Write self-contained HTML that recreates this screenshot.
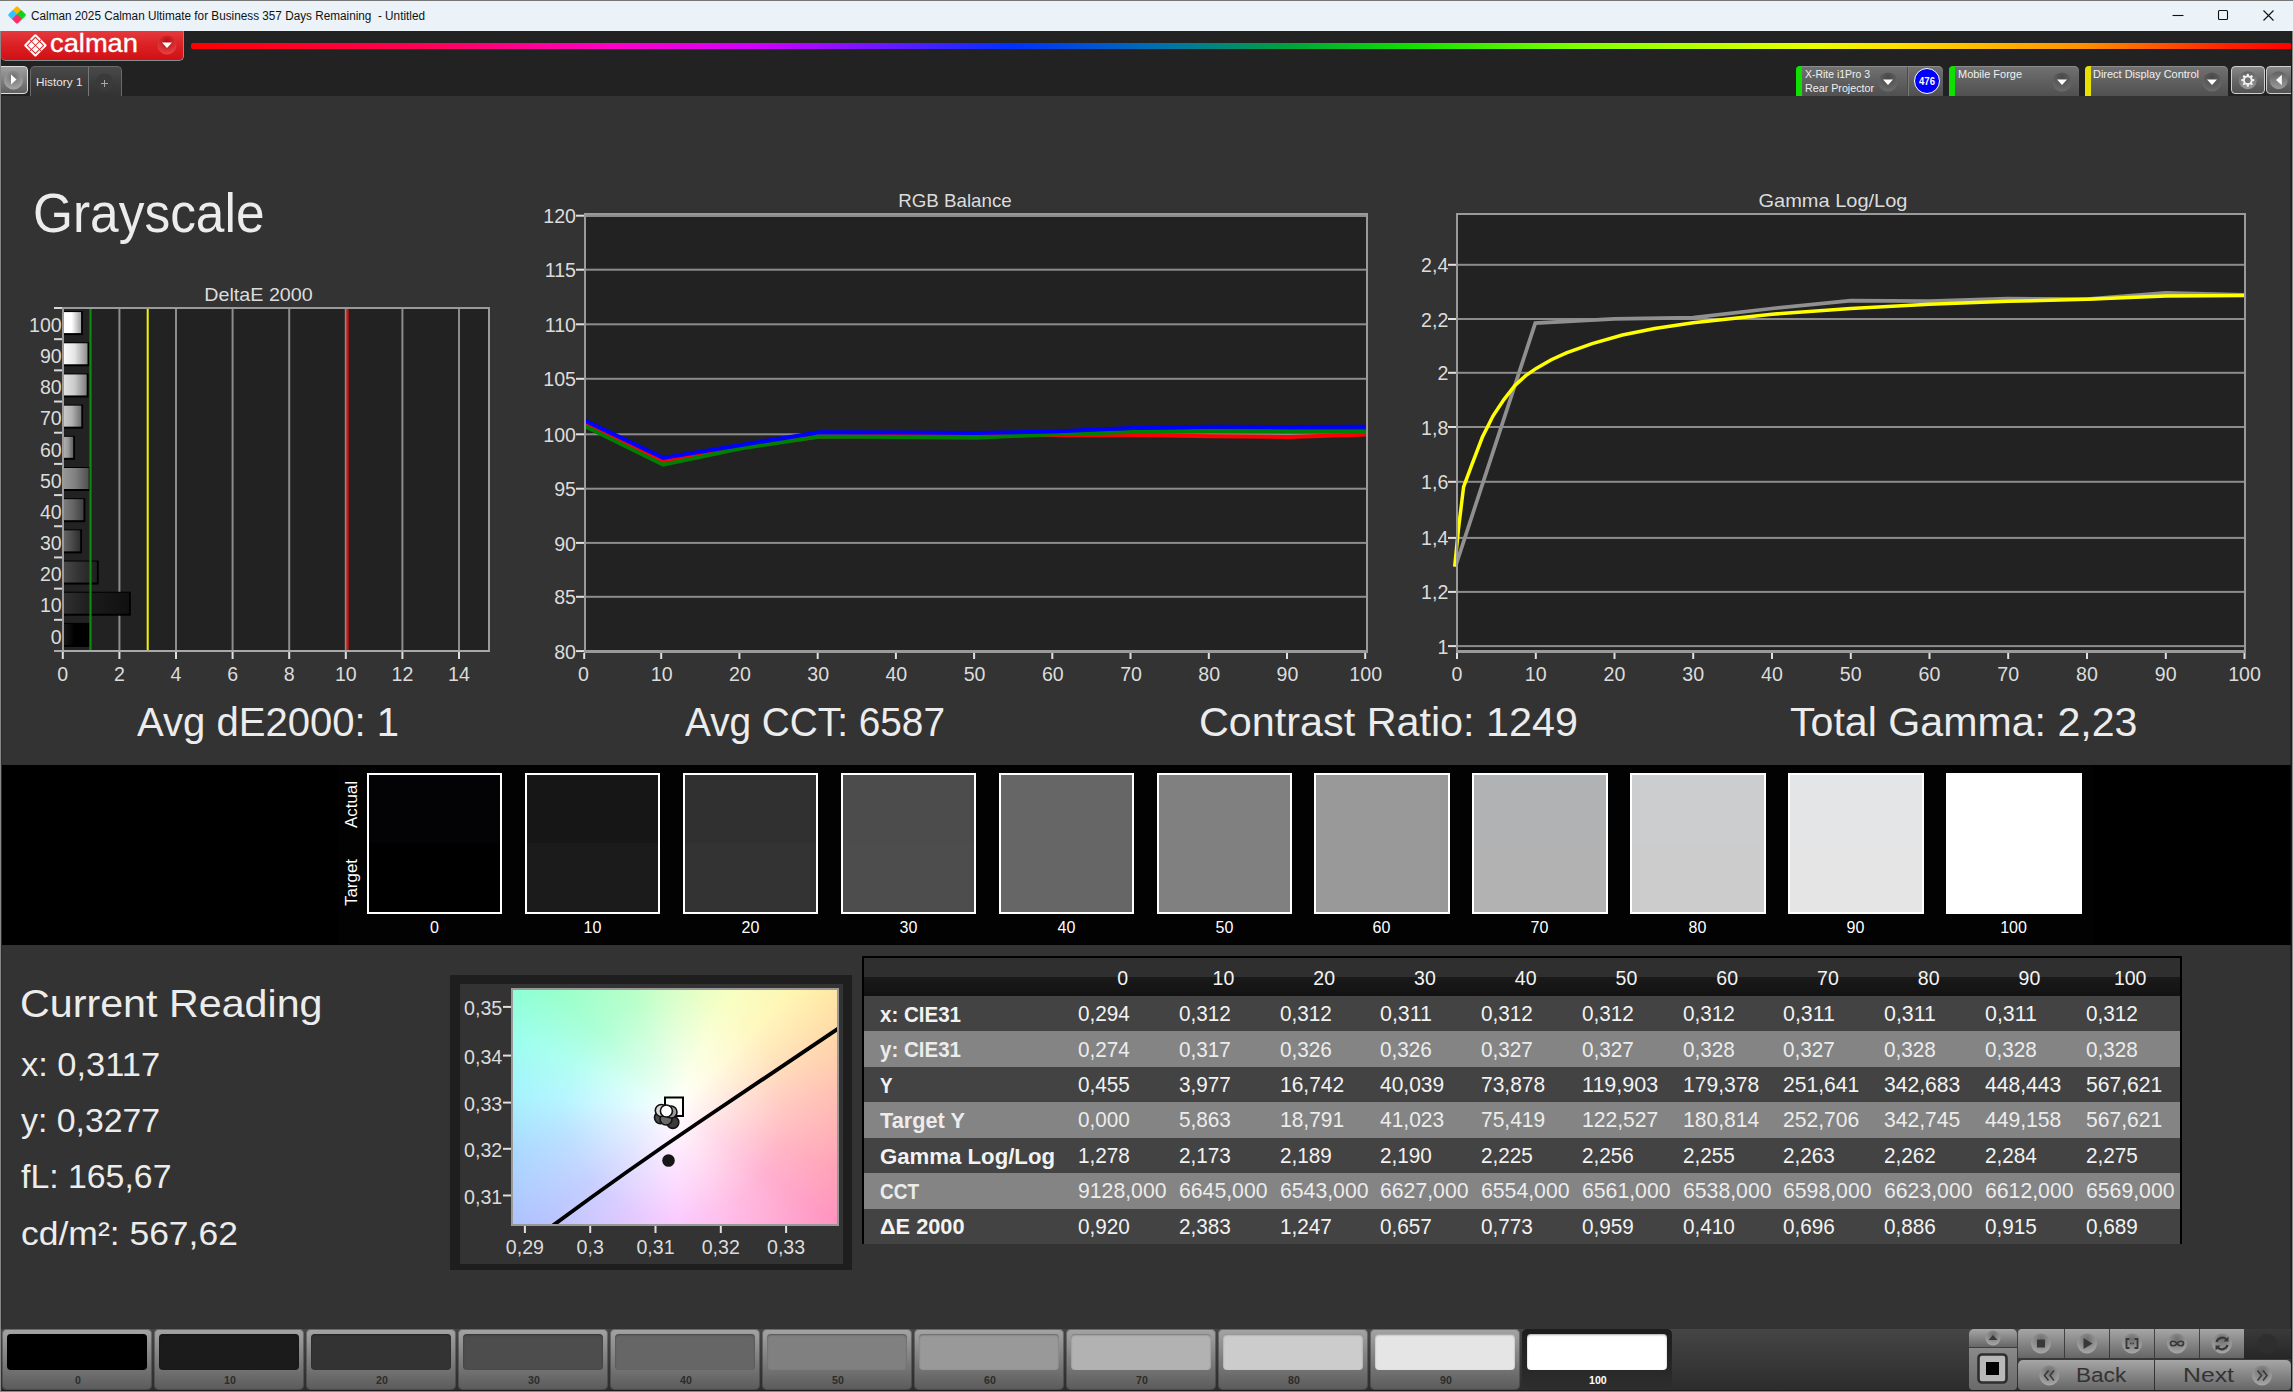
<!DOCTYPE html>
<html><head><meta charset="utf-8"><title>Calman 2025 - Grayscale</title>
<style>
html,body{margin:0;padding:0;background:#333;}
body{width:2293px;height:1392px;position:relative;overflow:hidden;font-family:"Liberation Sans",sans-serif;}
.t{position:absolute;white-space:nowrap;transform-origin:0 50%;}
svg{position:absolute;left:0;top:0;overflow:visible}
svg text{font-family:"Liberation Sans",sans-serif;}
</style></head><body>
<div style="position:absolute;left:0px;top:0px;width:2293px;height:1392px;background:#333;"></div>
<div style="position:absolute;left:0px;top:0px;width:2293px;height:31px;background:#ebf3f9;border-top:1px solid #777;box-sizing:border-box;"></div>
<svg width="40" height="31" viewBox="0 0 40 31"><g transform="translate(17,15)">
<rect x="-3.6" y="-3.6" width="7.2" height="7.2" rx="1.3" transform="translate(0,-4.2) rotate(45)" fill="#ffb400"/>
<rect x="-3.6" y="-3.6" width="7.2" height="7.2" rx="1.3" transform="translate(-4.2,0) rotate(45)" fill="#35c3ff"/>
<rect x="-3.6" y="-3.6" width="7.2" height="7.2" rx="1.3" transform="translate(4.2,0) rotate(45)" fill="#0fd21e"/>
<rect x="-3.6" y="-3.6" width="7.2" height="7.2" rx="1.3" transform="translate(0,4.2) rotate(45)" fill="#ff2a68"/>
</g></svg>
<span class="t" style="left:31.00px;top:8.84px;font-size:12px;line-height:14.40px;color:#111;transform:scaleX(0.9796);">Calman 2025 Calman Ultimate for Business 357 Days Remaining&nbsp; - Untitled</span>
<svg width="2293" height="31" viewBox="0 0 2293 31" fill="none" stroke="#111" stroke-width="1.1">
<path d="M2172.5 15.5h11"/><rect x="2218.5" y="10.5" width="9" height="9" rx="1"/><path d="M2263.5 10.5l10 10M2273.5 10.5l-10 10"/></svg>
<div style="position:absolute;left:0px;top:31px;width:2293px;height:65px;background:#222;"></div>
<div style="position:absolute;left:191px;top:43.4px;width:2102px;height:5.4px;background:linear-gradient(90deg,#ff0000 0%,#ff0060 12%,#ff00c8 20%,#d000ff 27%,#6a18ff 33%,#0030ff 39%,#0070b0 46%,#00a040 52%,#10e000 58%,#80ff00 66%,#e8ff00 77%,#ffe000 81%,#ff9000 90%,#ff2000 97%,#ff0000 100%);border-radius:2px 0 0 2px;"></div>
<div style="position:absolute;left:1px;top:31px;width:182px;height:29px;background:linear-gradient(#e53a3e 0%,#dc2226 45%,#d01014 100%);border-radius:0 0 5px 5px;border-right:1px solid #858f8f;border-bottom:1px solid #858f8f;"></div>
<svg width="190" height="62" viewBox="0 0 190 62">
<defs><radialGradient id="rb" cx="50%" cy="30%" r="70%"><stop offset="0" stop-color="#b80c10"/><stop offset="1" stop-color="#e84448"/></radialGradient></defs>
<circle cx="167" cy="45" r="9.5" fill="url(#rb)"/>
<path d="M162 42.5h10l-5 5.5z" fill="#fff"/>
<g transform="translate(35.4,45.4) rotate(45)">
<rect x="-8.3" y="-8.3" width="16.6" height="16.6" rx="1.6" fill="#fff"/>
<rect x="-5.75" y="-5.75" width="11.5" height="11.5" fill="none" stroke="#dc2024" stroke-width="0.95"/>
<path d="M0 -8.3V8.3M-8.3 0H8.3" stroke="#dc2024" stroke-width="0.95" fill="none"/>
</g>
</svg>
<span class="t" style="left:50.30px;top:28.05px;font-size:25.2px;line-height:30.24px;color:#fff;transform:scaleX(1.0832);-webkit-text-stroke:0.35px #fff;">calman</span>
<div style="position:absolute;left:-3px;top:66px;width:31px;height:28px;background:linear-gradient(#a0a0a0,#808080 50%,#606060);border:1px solid #dcdcdc;border-radius:4px;box-sizing:border-box;"></div>
<svg width="30" height="96" viewBox="0 0 30 96"><defs><radialGradient id="pg" cx="50%" cy="35%" r="65%"><stop offset="0" stop-color="#6e6e6e"/><stop offset="1" stop-color="#a8a8a8"/></radialGradient></defs>
<circle cx="13.5" cy="80" r="9.5" fill="url(#pg)"/><path d="M11 74.5v10l5.5-5z" fill="#fff"/></svg>
<div style="position:absolute;left:30px;top:66px;width:92px;height:30px;background:linear-gradient(#4a4a4a,#3a3a3a 60%,#333);border:1px solid #6a6a6a;border-bottom:none;border-radius:5px 5px 0 0;box-sizing:border-box;"></div>
<div style="position:absolute;left:88px;top:67px;width:1px;height:29px;background:#777;"></div>
<span class="t" style="left:36.00px;top:75.22px;font-size:11.6px;line-height:13.92px;color:#e6e6e6;transform:scaleX(1.0160);">History 1</span>
<svg width="130" height="96" viewBox="0 0 130 96"><circle cx="104.5" cy="82.5" r="9" fill="#3a3a3a"/><path d="M101 83.5h7M104.5 80v7" stroke="#a8a8a8" stroke-width="1" fill="none"/></svg>
<svg width="0" height="0"><defs><radialGradient id="ddg" cx="50%" cy="25%" r="75%"><stop offset="0" stop-color="#484848"/><stop offset="1" stop-color="#6c6c6c"/></radialGradient></defs></svg>
<div style="position:absolute;left:1796px;top:66px;width:147px;height:30px;background:linear-gradient(#727272,#606060 50%,#505050);border-radius:5px 5px 0 0;box-shadow:inset 0 1px 0 #8a8a8a;"></div>
<div style="position:absolute;left:1796px;top:66px;width:6px;height:30px;background:#0fe000;border-radius:4px 0 0 0;"></div>
<div style="position:absolute;left:1907px;top:67px;width:1px;height:29px;background:#4a4a4a;box-shadow:1px 0 0 #7a7a7a;"></div>
<span class="t" style="left:1805.00px;top:68.12px;font-size:11.5px;line-height:13.80px;color:#f0f0f0;transform:scaleX(0.9080);">X-Rite i1Pro 3</span>
<span class="t" style="left:1805.00px;top:82.12px;font-size:11.5px;line-height:13.80px;color:#f0f0f0;transform:scaleX(0.9307);">Rear Projector</span>
<svg width="2293" height="100" viewBox="0 0 2293 100"><circle cx="1888" cy="82" r="9.5" fill="url(#ddg)"/><path d="M1883 79.5h10l-5 5.5z" fill="#fff"/></svg>
<div style="position:absolute;left:1914px;top:68px;width:26px;height:26px;background:#0000ff;border:1px solid #fff;border-radius:50%;box-sizing:border-box;"></div>
<span class="t" style="left:1919.00px;top:75.06px;font-size:10.5px;line-height:12.60px;color:#fff;font-weight:bold;transform:scaleX(0.9133);">476</span>
<div style="position:absolute;left:1949px;top:66px;width:130px;height:30px;background:linear-gradient(#727272,#606060 50%,#505050);border-radius:5px 5px 0 0;box-shadow:inset 0 1px 0 #8a8a8a;"></div>
<div style="position:absolute;left:1949px;top:66px;width:6px;height:30px;background:#0fe000;border-radius:4px 0 0 0;"></div>
<span class="t" style="left:1958.00px;top:68.12px;font-size:11.5px;line-height:13.80px;color:#f0f0f0;transform:scaleX(0.9536);">Mobile Forge</span>
<svg width="2293" height="100" viewBox="0 0 2293 100"><circle cx="2062" cy="82" r="9.5" fill="url(#ddg)"/><path d="M2057 79.5h10l-5 5.5z" fill="#fff"/></svg>
<div style="position:absolute;left:2085px;top:66px;width:143px;height:30px;background:linear-gradient(#727272,#606060 50%,#505050);border-radius:5px 5px 0 0;box-shadow:inset 0 1px 0 #8a8a8a;"></div>
<div style="position:absolute;left:2085px;top:66px;width:6px;height:30px;background:#e8e000;border-radius:4px 0 0 0;"></div>
<span class="t" style="left:2093.00px;top:68.12px;font-size:11.5px;line-height:13.80px;color:#f0f0f0;transform:scaleX(0.9532);">Direct Display Control</span>
<svg width="2293" height="100" viewBox="0 0 2293 100"><circle cx="2212" cy="82" r="9.5" fill="url(#ddg)"/><path d="M2207 79.5h10l-5 5.5z" fill="#fff"/></svg>
<div style="position:absolute;left:2231px;top:66px;width:33.5px;height:28px;background:linear-gradient(#888,#686868 50%,#525252);border:1px solid #cfcfcf;border-radius:4px;box-sizing:border-box;"></div>
<div style="position:absolute;left:2265.5px;top:66px;width:30px;height:28px;background:linear-gradient(#888,#686868 50%,#525252);border:1px solid #cfcfcf;border-radius:4px;box-sizing:border-box;"></div>
<svg width="2293" height="100" viewBox="0 0 2293 100">
<defs><linearGradient id="bg2" x1="0" x2="0" y1="0" y2="1"><stop offset="0" stop-color="#606060"/><stop offset="1" stop-color="#9c9c9c"/></linearGradient></defs>
<circle cx="2247.800" cy="80.200" r="9" fill="url(#bg2)"/><circle cx="2278.700" cy="80.200" r="9" fill="url(#bg2)"/>
<g transform="translate(2247.800,80.200)"><path d="M-1.39 -4.49 L-0.84 -6.45 L0.84 -6.45 L1.39 -4.49 L2.19 -4.16 L3.96 -5.15 L5.15 -3.96 L4.16 -2.19 L4.49 -1.39 L6.45 -0.84 L6.45 0.84 L4.49 1.39 L4.16 2.19 L5.15 3.96 L3.96 5.15 L2.19 4.16 L1.39 4.49 L0.84 6.45 L-0.84 6.45 L-1.39 4.49 L-2.19 4.16 L-3.96 5.15 L-5.15 3.96 L-4.16 2.19 L-4.49 1.39 L-6.45 0.84 L-6.45 -0.84 L-4.49 -1.39 L-4.16 -2.19 L-5.15 -3.96 L-3.96 -5.15 L-2.19 -4.16Z" fill="#f0f0f0"/><circle r="2.900" fill="#747474"/></g>
<path d="M2281.800 74.800v10.400l-5.800 -5.200z" fill="#fff"/></svg>
<span class="t" style="left:33.20px;top:178.90px;font-size:56px;line-height:67.20px;color:#ececec;transform:scaleX(0.9183);">Grayscale</span>
<svg width="2293" height="700" viewBox="0 0 2293 700"><rect x="63" y="308" width="426" height="343" fill="#222"/>
<rect x="118.4" y="308" width="2" height="343" fill="#8c8c8c"/>
<rect x="175.0" y="308" width="2" height="343" fill="#8c8c8c"/>
<rect x="231.6" y="308" width="2" height="343" fill="#8c8c8c"/>
<rect x="288.2" y="308" width="2" height="343" fill="#8c8c8c"/>
<rect x="344.8" y="308" width="2" height="343" fill="#8c8c8c"/>
<rect x="401.4" y="308" width="2" height="343" fill="#8c8c8c"/>
<rect x="458.0" y="308" width="2" height="343" fill="#8c8c8c"/>
<defs>
<linearGradient id="bg100" x1="0" x2="1" y1="0" y2="0"><stop offset="0" stop-color="rgb(255,255,255)"/><stop offset="0.45" stop-color="rgb(255,255,255)"/><stop offset="1" stop-color="rgb(158,158,158)"/></linearGradient>
<linearGradient id="bg90" x1="0" x2="1" y1="0" y2="0"><stop offset="0" stop-color="rgb(251,251,251)"/><stop offset="0.45" stop-color="rgb(229,229,229)"/><stop offset="1" stop-color="rgb(141,141,141)"/></linearGradient>
<linearGradient id="bg80" x1="0" x2="1" y1="0" y2="0"><stop offset="0" stop-color="rgb(226,226,226)"/><stop offset="0.45" stop-color="rgb(204,204,204)"/><stop offset="1" stop-color="rgb(126,126,126)"/></linearGradient>
<linearGradient id="bg70" x1="0" x2="1" y1="0" y2="0"><stop offset="0" stop-color="rgb(200,200,200)"/><stop offset="0.45" stop-color="rgb(178,178,178)"/><stop offset="1" stop-color="rgb(110,110,110)"/></linearGradient>
<linearGradient id="bg60" x1="0" x2="1" y1="0" y2="0"><stop offset="0" stop-color="rgb(175,175,175)"/><stop offset="0.45" stop-color="rgb(153,153,153)"/><stop offset="1" stop-color="rgb(94,94,94)"/></linearGradient>
<linearGradient id="bg50" x1="0" x2="1" y1="0" y2="0"><stop offset="0" stop-color="rgb(150,150,150)"/><stop offset="0.45" stop-color="rgb(128,128,128)"/><stop offset="1" stop-color="rgb(79,79,79)"/></linearGradient>
<linearGradient id="bg40" x1="0" x2="1" y1="0" y2="0"><stop offset="0" stop-color="rgb(124,124,124)"/><stop offset="0.45" stop-color="rgb(102,102,102)"/><stop offset="1" stop-color="rgb(63,63,63)"/></linearGradient>
<linearGradient id="bg30" x1="0" x2="1" y1="0" y2="0"><stop offset="0" stop-color="rgb(99,99,99)"/><stop offset="0.45" stop-color="rgb(77,77,77)"/><stop offset="1" stop-color="rgb(47,47,47)"/></linearGradient>
<linearGradient id="bg20" x1="0" x2="1" y1="0" y2="0"><stop offset="0" stop-color="rgb(73,73,73)"/><stop offset="0.45" stop-color="rgb(51,51,51)"/><stop offset="1" stop-color="rgb(31,31,31)"/></linearGradient>
<linearGradient id="bg10" x1="0" x2="1" y1="0" y2="0"><stop offset="0" stop-color="rgb(48,48,48)"/><stop offset="0.45" stop-color="rgb(26,26,26)"/><stop offset="1" stop-color="rgb(16,16,16)"/></linearGradient>
<linearGradient id="bg0" x1="0" x2="1" y1="0" y2="0"><stop offset="0" stop-color="rgb(22,22,22)"/><stop offset="0.45" stop-color="rgb(0,0,0)"/><stop offset="1" stop-color="rgb(0,0,0)"/></linearGradient>
</defs>
<rect x="64" y="311.09" width="18.90" height="24" fill="#000"/>
<rect x="64" y="312.09" width="17.10" height="21" fill="url(#bg100)"/>
<rect x="54" y="307.00" width="9" height="2" fill="#d8d8d8"/>
<text x="61.70" y="331.79" font-size="19.6" text-anchor="end" fill="#dcdcdc">100</text>
<rect x="64" y="342.27" width="25.29" height="24" fill="#000"/>
<rect x="64" y="343.27" width="23.49" height="21" fill="url(#bg90)"/>
<rect x="54" y="338.18" width="9" height="2" fill="#d8d8d8"/>
<text x="61.70" y="362.97" font-size="19.6" text-anchor="end" fill="#dcdcdc">90</text>
<rect x="64" y="373.45" width="24.47" height="24" fill="#000"/>
<rect x="64" y="374.45" width="22.67" height="21" fill="url(#bg80)"/>
<rect x="54" y="369.36" width="9" height="2" fill="#d8d8d8"/>
<text x="61.70" y="394.15" font-size="19.6" text-anchor="end" fill="#dcdcdc">80</text>
<rect x="64" y="404.64" width="19.10" height="24" fill="#000"/>
<rect x="64" y="405.64" width="17.30" height="21" fill="url(#bg70)"/>
<rect x="54" y="400.55" width="9" height="2" fill="#d8d8d8"/>
<text x="61.70" y="425.34" font-size="19.6" text-anchor="end" fill="#dcdcdc">70</text>
<rect x="64" y="435.82" width="11.00" height="24" fill="#000"/>
<rect x="64" y="436.82" width="9.20" height="21" fill="url(#bg60)"/>
<rect x="54" y="431.73" width="9" height="2" fill="#d8d8d8"/>
<text x="61.70" y="456.52" font-size="19.6" text-anchor="end" fill="#dcdcdc">60</text>
<rect x="64" y="467.00" width="26.54" height="24" fill="#000"/>
<rect x="64" y="468.00" width="24.74" height="21" fill="url(#bg50)"/>
<rect x="54" y="462.91" width="9" height="2" fill="#d8d8d8"/>
<text x="61.70" y="487.70" font-size="19.6" text-anchor="end" fill="#dcdcdc">50</text>
<rect x="64" y="498.18" width="21.28" height="24" fill="#000"/>
<rect x="64" y="499.18" width="19.48" height="21" fill="url(#bg40)"/>
<rect x="54" y="494.09" width="9" height="2" fill="#d8d8d8"/>
<text x="61.70" y="518.88" font-size="19.6" text-anchor="end" fill="#dcdcdc">40</text>
<rect x="64" y="529.36" width="17.99" height="24" fill="#000"/>
<rect x="64" y="530.36" width="16.19" height="21" fill="url(#bg30)"/>
<rect x="54" y="525.27" width="9" height="2" fill="#d8d8d8"/>
<text x="61.70" y="550.06" font-size="19.6" text-anchor="end" fill="#dcdcdc">30</text>
<rect x="64" y="560.55" width="34.69" height="24" fill="#000"/>
<rect x="64" y="561.55" width="32.89" height="21" fill="url(#bg20)"/>
<rect x="54" y="556.45" width="9" height="2" fill="#d8d8d8"/>
<text x="61.70" y="581.25" font-size="19.6" text-anchor="end" fill="#dcdcdc">20</text>
<rect x="64" y="591.73" width="66.84" height="24" fill="#000"/>
<rect x="64" y="592.73" width="65.04" height="21" fill="url(#bg10)"/>
<rect x="54" y="587.64" width="9" height="2" fill="#d8d8d8"/>
<text x="61.70" y="612.43" font-size="19.6" text-anchor="end" fill="#dcdcdc">10</text>
<rect x="64" y="622.91" width="25.44" height="24" fill="#000"/>
<rect x="64" y="623.91" width="23.64" height="21" fill="url(#bg0)"/>
<rect x="54" y="618.82" width="9" height="2" fill="#d8d8d8"/>
<text x="61.70" y="643.61" font-size="19.6" text-anchor="end" fill="#dcdcdc">0</text>
<rect x="54" y="650" width="9" height="2" fill="#d8d8d8"/>
<rect x="89.4" y="308" width="2.2" height="344" fill="#0a8c0a"/>
<rect x="146.7" y="308" width="2" height="343" fill="#f4f400"/>
<rect x="346.5" y="308" width="2.1" height="344" fill="#f00808"/>
<path d="M63 652V308H489V652" fill="none" stroke="#9a9a9a" stroke-width="2"/>
<rect x="54" y="650" width="436" height="2" fill="#a8a8a8"/>
<rect x="61.8" y="652" width="2" height="7" fill="#e0e0e0"/>
<text x="62.80" y="680.80" font-size="19.6" text-anchor="middle" fill="#dcdcdc">0</text>
<rect x="118.4" y="652" width="2" height="7" fill="#e0e0e0"/>
<text x="119.40" y="680.80" font-size="19.6" text-anchor="middle" fill="#dcdcdc">2</text>
<rect x="175.0" y="652" width="2" height="7" fill="#e0e0e0"/>
<text x="176.00" y="680.80" font-size="19.6" text-anchor="middle" fill="#dcdcdc">4</text>
<rect x="231.6" y="652" width="2" height="7" fill="#e0e0e0"/>
<text x="232.60" y="680.80" font-size="19.6" text-anchor="middle" fill="#dcdcdc">6</text>
<rect x="288.2" y="652" width="2" height="7" fill="#e0e0e0"/>
<text x="289.20" y="680.80" font-size="19.6" text-anchor="middle" fill="#dcdcdc">8</text>
<rect x="344.8" y="652" width="2" height="7" fill="#e0e0e0"/>
<text x="345.80" y="680.80" font-size="19.6" text-anchor="middle" fill="#dcdcdc">10</text>
<rect x="401.4" y="652" width="2" height="7" fill="#e0e0e0"/>
<text x="402.40" y="680.80" font-size="19.6" text-anchor="middle" fill="#dcdcdc">12</text>
<rect x="458.0" y="652" width="2" height="7" fill="#e0e0e0"/>
<text x="459.00" y="680.80" font-size="19.6" text-anchor="middle" fill="#dcdcdc">14</text>
<text x="258.50" y="300.70" font-size="19" text-anchor="middle" fill="#dcdcdc" textLength="108.5" lengthAdjust="spacingAndGlyphs">DeltaE 2000</text>
<rect x="585" y="214" width="782" height="438" fill="#222"/>
<rect x="576" y="650.1" width="8" height="2" fill="#e0e0e0"/>
<text x="576.00" y="658.70" font-size="19.6" text-anchor="end" fill="#dcdcdc">80</text>
<rect x="585" y="595.8" width="782" height="2" fill="#8c8c8c"/>
<rect x="576" y="595.8" width="8" height="2" fill="#e0e0e0"/>
<text x="576.00" y="604.40" font-size="19.6" text-anchor="end" fill="#dcdcdc">85</text>
<rect x="585" y="541.9" width="782" height="2" fill="#8c8c8c"/>
<rect x="576" y="541.9" width="8" height="2" fill="#e0e0e0"/>
<text x="576.00" y="550.50" font-size="19.6" text-anchor="end" fill="#dcdcdc">90</text>
<rect x="585" y="487.7" width="782" height="2" fill="#8c8c8c"/>
<rect x="576" y="487.7" width="8" height="2" fill="#e0e0e0"/>
<text x="576.00" y="496.30" font-size="19.6" text-anchor="end" fill="#dcdcdc">95</text>
<rect x="585" y="433.3" width="782" height="2" fill="#8c8c8c"/>
<rect x="576" y="433.3" width="8" height="2" fill="#e0e0e0"/>
<text x="576.00" y="441.90" font-size="19.6" text-anchor="end" fill="#dcdcdc">100</text>
<rect x="585" y="377.8" width="782" height="2" fill="#8c8c8c"/>
<rect x="576" y="377.8" width="8" height="2" fill="#e0e0e0"/>
<text x="576.00" y="386.40" font-size="19.6" text-anchor="end" fill="#dcdcdc">105</text>
<rect x="585" y="323.3" width="782" height="2" fill="#8c8c8c"/>
<rect x="576" y="323.3" width="8" height="2" fill="#e0e0e0"/>
<text x="576.00" y="331.90" font-size="19.6" text-anchor="end" fill="#dcdcdc">110</text>
<rect x="585" y="268.7" width="782" height="2" fill="#8c8c8c"/>
<rect x="576" y="268.7" width="8" height="2" fill="#e0e0e0"/>
<text x="576.00" y="277.30" font-size="19.6" text-anchor="end" fill="#dcdcdc">115</text>
<rect x="576" y="214.7" width="8" height="2" fill="#e0e0e0"/>
<text x="576.00" y="223.30" font-size="19.6" text-anchor="end" fill="#dcdcdc">120</text>
<clipPath id="rclip"><rect x="584" y="215" width="783" height="436"/></clipPath><g clip-path="url(#rclip)">
<polyline points="585.0,423.3 663.2,461.2 741.4,447.0 819.6,436.6 897.8,436.0 976.0,435.8 1054.2,434.9 1132.4,434.9 1210.6,436.3 1288.8,437.0 1367.0,434.4" fill="none" stroke="#ff0000" stroke-width="4" stroke-linejoin="miter" stroke-linecap="butt"/>
<polyline points="585.0,426.2 663.2,464.7 741.4,448.3 819.6,436.5 897.8,437.0 976.0,437.7 1054.2,434.2 1132.4,431.9 1210.6,431.0 1288.8,431.4 1367.0,431.4" fill="none" stroke="#008000" stroke-width="4" stroke-linejoin="miter" stroke-linecap="butt"/>
<polyline points="585.0,420.6 663.2,457.9 741.4,445.0 819.6,432.2 897.8,432.6 976.0,433.0 1054.2,431.4 1132.4,427.9 1210.6,426.7 1288.8,427.0 1367.0,426.7" fill="none" stroke="#0000ff" stroke-width="4" stroke-linejoin="miter" stroke-linecap="butt"/>
</g>
<rect x="585" y="215" width="782" height="2" fill="#8c8c8c"/>
<rect x="585" y="214" width="782" height="437.5" fill="none" stroke="#9a9a9a" stroke-width="2"/>
<rect x="584" y="650" width="784" height="3" fill="#9a9a9a"/>
<rect x="583.2" y="653" width="2" height="6" fill="#e0e0e0"/>
<text x="583.50" y="680.80" font-size="19.6" text-anchor="middle" fill="#dcdcdc">0</text>
<rect x="660.2" y="653" width="2" height="6" fill="#e0e0e0"/>
<text x="661.72" y="680.80" font-size="19.6" text-anchor="middle" fill="#dcdcdc">10</text>
<rect x="738.4" y="653" width="2" height="6" fill="#e0e0e0"/>
<text x="739.94" y="680.80" font-size="19.6" text-anchor="middle" fill="#dcdcdc">20</text>
<rect x="816.7" y="653" width="2" height="6" fill="#e0e0e0"/>
<text x="818.16" y="680.80" font-size="19.6" text-anchor="middle" fill="#dcdcdc">30</text>
<rect x="894.9" y="653" width="2" height="6" fill="#e0e0e0"/>
<text x="896.38" y="680.80" font-size="19.6" text-anchor="middle" fill="#dcdcdc">40</text>
<rect x="973.1" y="653" width="2" height="6" fill="#e0e0e0"/>
<text x="974.60" y="680.80" font-size="19.6" text-anchor="middle" fill="#dcdcdc">50</text>
<rect x="1051.3" y="653" width="2" height="6" fill="#e0e0e0"/>
<text x="1052.82" y="680.80" font-size="19.6" text-anchor="middle" fill="#dcdcdc">60</text>
<rect x="1129.5" y="653" width="2" height="6" fill="#e0e0e0"/>
<text x="1131.04" y="680.80" font-size="19.6" text-anchor="middle" fill="#dcdcdc">70</text>
<rect x="1207.8" y="653" width="2" height="6" fill="#e0e0e0"/>
<text x="1209.26" y="680.80" font-size="19.6" text-anchor="middle" fill="#dcdcdc">80</text>
<rect x="1286.0" y="653" width="2" height="6" fill="#e0e0e0"/>
<text x="1287.48" y="680.80" font-size="19.6" text-anchor="middle" fill="#dcdcdc">90</text>
<rect x="1364.2" y="653" width="2" height="6" fill="#e0e0e0"/>
<text x="1365.70" y="680.80" font-size="19.6" text-anchor="middle" fill="#dcdcdc">100</text>
<text x="955.00" y="206.90" font-size="19" text-anchor="middle" fill="#dcdcdc" textLength="113.5" lengthAdjust="spacingAndGlyphs">RGB Balance</text>
<rect x="1457" y="214" width="788" height="438" fill="#222"/>
<rect x="1458" y="645.1" width="787" height="2" fill="#8c8c8c"/>
<rect x="1448" y="645.1" width="9" height="2" fill="#e0e0e0"/>
<text x="1448.30" y="653.60" font-size="19.6" text-anchor="end" fill="#dcdcdc">1</text>
<rect x="1458" y="590.9" width="787" height="2" fill="#8c8c8c"/>
<rect x="1448" y="590.9" width="9" height="2" fill="#e0e0e0"/>
<text x="1448.30" y="599.40" font-size="19.6" text-anchor="end" fill="#dcdcdc">1,2</text>
<rect x="1458" y="536.9" width="787" height="2" fill="#8c8c8c"/>
<rect x="1448" y="536.9" width="9" height="2" fill="#e0e0e0"/>
<text x="1448.30" y="545.40" font-size="19.6" text-anchor="end" fill="#dcdcdc">1,4</text>
<rect x="1458" y="480.8" width="787" height="2" fill="#8c8c8c"/>
<rect x="1448" y="480.8" width="9" height="2" fill="#e0e0e0"/>
<text x="1448.30" y="489.30" font-size="19.6" text-anchor="end" fill="#dcdcdc">1,6</text>
<rect x="1458" y="426.0" width="787" height="2" fill="#8c8c8c"/>
<rect x="1448" y="426.0" width="9" height="2" fill="#e0e0e0"/>
<text x="1448.30" y="434.50" font-size="19.6" text-anchor="end" fill="#dcdcdc">1,8</text>
<rect x="1458" y="371.8" width="787" height="2" fill="#8c8c8c"/>
<rect x="1448" y="371.8" width="9" height="2" fill="#e0e0e0"/>
<text x="1448.30" y="380.30" font-size="19.6" text-anchor="end" fill="#dcdcdc">2</text>
<rect x="1458" y="318.0" width="787" height="2" fill="#8c8c8c"/>
<rect x="1448" y="318.0" width="9" height="2" fill="#e0e0e0"/>
<text x="1448.30" y="326.50" font-size="19.6" text-anchor="end" fill="#dcdcdc">2,2</text>
<rect x="1458" y="263.8" width="787" height="2" fill="#8c8c8c"/>
<rect x="1448" y="263.8" width="9" height="2" fill="#e0e0e0"/>
<text x="1448.30" y="272.30" font-size="19.6" text-anchor="end" fill="#dcdcdc">2,4</text>
<polyline points="1455.4,566.6 1535.3,323.1 1614.5,318.8 1693.2,317.6 1772.0,308.5 1850.8,300.6 1929.5,301.1 2008.2,298.6 2087.0,299.1 2165.8,292.9 2244.5,294.9" fill="none" stroke="#909090" stroke-width="3.7" stroke-linejoin="miter" stroke-linecap="butt"/>
<polyline points="1454.7,566.6 1458.6,527.8 1463.6,486.9 1471.6,465.3 1482.3,437.3 1493.1,415.8 1503.9,399.6 1514.7,385.6 1525.4,375.9 1536.2,368.4 1551.3,359.7 1566.4,352.8 1592.2,343.6 1622.4,335.0 1654.7,328.5 1693.2,322.7 1772.0,314.2 1850.8,308.5 1929.5,304.3 2008.2,301.3 2087.0,299.3 2165.8,296.1 2244.5,295.6" fill="none" stroke="#ffff00" stroke-width="3.5" stroke-linejoin="miter" stroke-linecap="butt"/>
<rect x="1457" y="214" width="788" height="437.5" fill="none" stroke="#9a9a9a" stroke-width="2"/>
<rect x="1456" y="650" width="790" height="3" fill="#9a9a9a"/>
<rect x="1456.0" y="653" width="2" height="6" fill="#e0e0e0"/>
<text x="1457.00" y="680.80" font-size="19.6" text-anchor="middle" fill="#dcdcdc">0</text>
<rect x="1534.8" y="653" width="2" height="6" fill="#e0e0e0"/>
<text x="1535.75" y="680.80" font-size="19.6" text-anchor="middle" fill="#dcdcdc">10</text>
<rect x="1613.5" y="653" width="2" height="6" fill="#e0e0e0"/>
<text x="1614.50" y="680.80" font-size="19.6" text-anchor="middle" fill="#dcdcdc">20</text>
<rect x="1692.2" y="653" width="2" height="6" fill="#e0e0e0"/>
<text x="1693.25" y="680.80" font-size="19.6" text-anchor="middle" fill="#dcdcdc">30</text>
<rect x="1771.0" y="653" width="2" height="6" fill="#e0e0e0"/>
<text x="1772.00" y="680.80" font-size="19.6" text-anchor="middle" fill="#dcdcdc">40</text>
<rect x="1849.8" y="653" width="2" height="6" fill="#e0e0e0"/>
<text x="1850.75" y="680.80" font-size="19.6" text-anchor="middle" fill="#dcdcdc">50</text>
<rect x="1928.5" y="653" width="2" height="6" fill="#e0e0e0"/>
<text x="1929.50" y="680.80" font-size="19.6" text-anchor="middle" fill="#dcdcdc">60</text>
<rect x="2007.2" y="653" width="2" height="6" fill="#e0e0e0"/>
<text x="2008.25" y="680.80" font-size="19.6" text-anchor="middle" fill="#dcdcdc">70</text>
<rect x="2086.0" y="653" width="2" height="6" fill="#e0e0e0"/>
<text x="2087.00" y="680.80" font-size="19.6" text-anchor="middle" fill="#dcdcdc">80</text>
<rect x="2164.8" y="653" width="2" height="6" fill="#e0e0e0"/>
<text x="2165.75" y="680.80" font-size="19.6" text-anchor="middle" fill="#dcdcdc">90</text>
<rect x="2243.5" y="653" width="2" height="6" fill="#e0e0e0"/>
<text x="2244.50" y="680.80" font-size="19.6" text-anchor="middle" fill="#dcdcdc">100</text>
<text x="1833.00" y="206.70" font-size="19" text-anchor="middle" fill="#dcdcdc" textLength="149" lengthAdjust="spacingAndGlyphs">Gamma Log/Log</text></svg>
<span class="t" style="left:136.50px;top:699.26px;font-size:40.3px;line-height:48.36px;color:#ececec;transform:scaleX(0.9937);">Avg dE2000: 1</span>
<span class="t" style="left:684.50px;top:699.26px;font-size:40.3px;line-height:48.36px;color:#ececec;transform:scaleX(0.9618);">Avg CCT: 6587</span>
<span class="t" style="left:1199.00px;top:699.26px;font-size:40.3px;line-height:48.36px;color:#ececec;transform:scaleX(1.0253);">Contrast Ratio: 1249</span>
<span class="t" style="left:1789.60px;top:699.26px;font-size:40.3px;line-height:48.36px;color:#ececec;transform:scaleX(1.0207);">Total Gamma: 2,23</span>
<div style="position:absolute;left:0px;top:765px;width:2293px;height:180px;background:#000;"></div>
<div style="position:absolute;left:338px;top:765px;width:1755px;height:180px;background:#020202;"></div>
<div style="position:absolute;left:367px;top:773px;width:135px;height:141px;box-sizing:border-box;border:2px solid #fff;background:linear-gradient(rgb(3,3,5) 0,rgb(3,3,5) 50%,rgb(0,0,0) 50%,rgb(0,0,0) 100%);"></div>
<span class="t" style="left:430.05px;top:917.86px;font-size:16px;line-height:19.20px;color:#fff;">0</span>
<div style="position:absolute;left:525px;top:773px;width:135px;height:141px;box-sizing:border-box;border:2px solid #fff;background:linear-gradient(rgb(22,22,22) 0,rgb(22,22,22) 50%,rgb(27,27,27) 50%,rgb(27,27,27) 100%);"></div>
<span class="t" style="left:583.60px;top:917.86px;font-size:16px;line-height:19.20px;color:#fff;">10</span>
<div style="position:absolute;left:683px;top:773px;width:135px;height:141px;box-sizing:border-box;border:2px solid #fff;background:linear-gradient(rgb(48,48,48) 0,rgb(48,48,48) 50%,rgb(51,51,51) 50%,rgb(51,51,51) 100%);"></div>
<span class="t" style="left:741.60px;top:917.86px;font-size:16px;line-height:19.20px;color:#fff;">20</span>
<div style="position:absolute;left:841px;top:773px;width:135px;height:141px;box-sizing:border-box;border:2px solid #fff;background:linear-gradient(rgb(76,76,76) 0,rgb(76,76,76) 50%,rgb(77,77,77) 50%,rgb(77,77,77) 100%);"></div>
<span class="t" style="left:899.60px;top:917.86px;font-size:16px;line-height:19.20px;color:#fff;">30</span>
<div style="position:absolute;left:999px;top:773px;width:135px;height:141px;box-sizing:border-box;border:2px solid #fff;background:linear-gradient(rgb(102,102,102) 0,rgb(102,102,102) 50%,rgb(102,102,102) 50%,rgb(102,102,102) 100%);"></div>
<span class="t" style="left:1057.60px;top:917.86px;font-size:16px;line-height:19.20px;color:#fff;">40</span>
<div style="position:absolute;left:1157px;top:773px;width:135px;height:141px;box-sizing:border-box;border:2px solid #fff;background:linear-gradient(rgb(128,128,128) 0,rgb(128,128,128) 50%,rgb(128,128,128) 50%,rgb(128,128,128) 100%);"></div>
<span class="t" style="left:1215.60px;top:917.86px;font-size:16px;line-height:19.20px;color:#fff;">50</span>
<div style="position:absolute;left:1314px;top:773px;width:136px;height:141px;box-sizing:border-box;border:2px solid #fff;background:linear-gradient(rgb(153,153,153) 0,rgb(153,153,153) 50%,rgb(153,153,153) 50%,rgb(153,153,153) 100%);"></div>
<span class="t" style="left:1372.60px;top:917.86px;font-size:16px;line-height:19.20px;color:#fff;">60</span>
<div style="position:absolute;left:1472px;top:773px;width:136px;height:141px;box-sizing:border-box;border:2px solid #fff;background:linear-gradient(rgb(177,178,179) 0,rgb(177,178,179) 50%,rgb(178,178,178) 50%,rgb(178,178,178) 100%);"></div>
<span class="t" style="left:1530.60px;top:917.86px;font-size:16px;line-height:19.20px;color:#fff;">70</span>
<div style="position:absolute;left:1630px;top:773px;width:136px;height:141px;box-sizing:border-box;border:2px solid #fff;background:linear-gradient(rgb(204,205,206) 0,rgb(204,205,206) 50%,rgb(204,204,204) 50%,rgb(204,204,204) 100%);"></div>
<span class="t" style="left:1688.60px;top:917.86px;font-size:16px;line-height:19.20px;color:#fff;">80</span>
<div style="position:absolute;left:1788px;top:773px;width:136px;height:141px;box-sizing:border-box;border:2px solid #fff;background:linear-gradient(rgb(228,229,230) 0,rgb(228,229,230) 50%,rgb(229,229,229) 50%,rgb(229,229,229) 100%);"></div>
<span class="t" style="left:1846.60px;top:917.86px;font-size:16px;line-height:19.20px;color:#fff;">90</span>
<div style="position:absolute;left:1946px;top:773px;width:136px;height:141px;box-sizing:border-box;border:2px solid #fff;background:linear-gradient(rgb(255,255,255) 0,rgb(255,255,255) 50%,rgb(255,255,255) 50%,rgb(255,255,255) 100%);"></div>
<span class="t" style="left:2000.15px;top:917.86px;font-size:16px;line-height:19.20px;color:#fff;">100</span>
<svg width="2293" height="1392" viewBox="0 0 2293 1392"><text transform="translate(357,828) rotate(-90)" font-size="16" fill="#fff" textLength="47" lengthAdjust="spacingAndGlyphs">Actual</text><text transform="translate(357,906) rotate(-90)" font-size="16" fill="#fff" textLength="47" lengthAdjust="spacingAndGlyphs">Target</text></svg>
<span class="t" style="left:20.30px;top:980.99px;font-size:39px;line-height:46.80px;color:#ececec;transform:scaleX(1.0571);">Current Reading</span>
<span class="t" style="left:20.60px;top:1044.85px;font-size:32.7px;line-height:39.24px;color:#ececec;transform:scaleX(1.0537);">x: 0,3117</span>
<span class="t" style="left:20.60px;top:1100.95px;font-size:32.7px;line-height:39.24px;color:#ececec;transform:scaleX(1.0347);">y: 0,3277</span>
<span class="t" style="left:20.60px;top:1157.25px;font-size:32.7px;line-height:39.24px;color:#ececec;transform:scaleX(1.0347);">fL: 165,67</span>
<span class="t" style="left:20.60px;top:1213.65px;font-size:32.7px;line-height:39.24px;color:#ececec;transform:scaleX(1.0853);">cd/m²: 567,62</span>
<div style="position:absolute;left:450px;top:975px;width:402px;height:294.5px;background:#1e1e1e;"></div>
<div style="position:absolute;left:460px;top:984px;width:383px;height:280px;background:#333;"></div>
<div style="position:absolute;left:511px;top:988px;width:328px;height:238px;box-sizing:border-box;border:2px solid #999;background:radial-gradient(circle at 162px 119px,rgba(255,255,255,1) 0,rgba(255,255,255,0.75) 40px,rgba(255,255,255,0.35) 110px,rgba(255,255,255,0) 230px),conic-gradient(from 0deg at 162px 119px,#c8ffb0 0deg,#f4ffa8 25deg,#fff4a0 45deg,#ffd898 62deg,#ffb0a0 85deg,#ff90a8 110deg,#ff88b8 125deg,#ffa0e0 155deg,#f8b0ff 180deg,#d0b0ff 205deg,#a8b8ff 230deg,#98d0ff 255deg,#90f0ff 275deg,#88ffe8 295deg,#80ffc0 315deg,#98ffb0 340deg,#c8ffb0 360deg);"></div>
<svg width="2293" height="1392" viewBox="0 0 2293 1392"><clipPath id="cclip"><rect x="513" y="990" width="324" height="234"/></clipPath>
<path clip-path="url(#cclip)" d="M549.5 1228 Q 625 1172 700 1121.5 T 842 1026" fill="none" stroke="#000" stroke-width="3.9"/>
<rect x="503" y="1194.5" width="8" height="2" fill="#e0e0e0"/>
<text x="502.3" y="1203.6" font-size="19.6" text-anchor="end" fill="#dcdcdc" textLength="38.3" lengthAdjust="spacingAndGlyphs">0,31</text>
<rect x="503" y="1147.8" width="8" height="2" fill="#e0e0e0"/>
<text x="502.3" y="1156.9" font-size="19.6" text-anchor="end" fill="#dcdcdc" textLength="38.3" lengthAdjust="spacingAndGlyphs">0,32</text>
<rect x="503" y="1101.6" width="8" height="2" fill="#e0e0e0"/>
<text x="502.3" y="1110.7" font-size="19.6" text-anchor="end" fill="#dcdcdc" textLength="38.3" lengthAdjust="spacingAndGlyphs">0,33</text>
<rect x="503" y="1054.6" width="8" height="2" fill="#e0e0e0"/>
<text x="502.3" y="1063.7" font-size="19.6" text-anchor="end" fill="#dcdcdc" textLength="38.3" lengthAdjust="spacingAndGlyphs">0,34</text>
<rect x="503" y="1005.9" width="8" height="2" fill="#e0e0e0"/>
<text x="502.3" y="1015.0" font-size="19.6" text-anchor="end" fill="#dcdcdc" textLength="38.3" lengthAdjust="spacingAndGlyphs">0,35</text>
<rect x="523.9" y="1226" width="2" height="7" fill="#e0e0e0"/>
<text x="524.9" y="1253.7" font-size="19.6" text-anchor="middle" fill="#dcdcdc">0,29</text>
<rect x="589.2" y="1226" width="2" height="7" fill="#e0e0e0"/>
<text x="590.2" y="1253.7" font-size="19.6" text-anchor="middle" fill="#dcdcdc">0,3</text>
<rect x="654.5" y="1226" width="2" height="7" fill="#e0e0e0"/>
<text x="655.5" y="1253.7" font-size="19.6" text-anchor="middle" fill="#dcdcdc">0,31</text>
<rect x="719.8" y="1226" width="2" height="7" fill="#e0e0e0"/>
<text x="720.8" y="1253.7" font-size="19.6" text-anchor="middle" fill="#dcdcdc">0,32</text>
<rect x="785.1" y="1226" width="2" height="7" fill="#e0e0e0"/>
<text x="786.1" y="1253.7" font-size="19.6" text-anchor="middle" fill="#dcdcdc">0,33</text>
<rect x="665" y="1097.5" width="18" height="18.5" fill="none" stroke="#000" stroke-width="2"/>
<circle cx="672.8" cy="1122.4" r="6" fill="#3a3a3a" stroke="#111" stroke-width="1.6"/>
<circle cx="660.5" cy="1117.6" r="6" fill="#4a4a4a" stroke="#111" stroke-width="1.6"/>
<circle cx="666" cy="1119" r="6" fill="#6a6a6a" stroke="#111" stroke-width="1.6"/>
<circle cx="671" cy="1112" r="6" fill="#9a9a9a" stroke="#111" stroke-width="1.6"/>
<circle cx="661.3" cy="1110.5" r="6" fill="#d8d8d8" stroke="#111" stroke-width="1.6"/>
<circle cx="666.4" cy="1111" r="6" fill="#ffffff" stroke="#111" stroke-width="1.6"/>
<circle cx="668.5" cy="1160.5" r="6.3" fill="#161616"/></svg>
<div style="position:absolute;left:862px;top:956px;width:1320px;height:288px;background:#000;"></div>
<div style="position:absolute;left:864px;top:958px;width:1316px;height:19px;background:#2f2f2f;"></div>
<div style="position:absolute;left:864px;top:977px;width:1316px;height:19px;background:linear-gradient(#1a1a1a,#121212);"></div>
<span class="t" style="left:1117.28px;top:966.84px;font-size:19.5px;line-height:23.40px;color:#f4f4f4;">0</span>
<span class="t" style="left:1212.60px;top:966.84px;font-size:19.5px;line-height:23.40px;color:#f4f4f4;">10</span>
<span class="t" style="left:1313.35px;top:966.84px;font-size:19.5px;line-height:23.40px;color:#f4f4f4;">20</span>
<span class="t" style="left:1414.10px;top:966.84px;font-size:19.5px;line-height:23.40px;color:#f4f4f4;">30</span>
<span class="t" style="left:1514.85px;top:966.84px;font-size:19.5px;line-height:23.40px;color:#f4f4f4;">40</span>
<span class="t" style="left:1615.60px;top:966.84px;font-size:19.5px;line-height:23.40px;color:#f4f4f4;">50</span>
<span class="t" style="left:1716.35px;top:966.84px;font-size:19.5px;line-height:23.40px;color:#f4f4f4;">60</span>
<span class="t" style="left:1817.10px;top:966.84px;font-size:19.5px;line-height:23.40px;color:#f4f4f4;">70</span>
<span class="t" style="left:1917.85px;top:966.84px;font-size:19.5px;line-height:23.40px;color:#f4f4f4;">80</span>
<span class="t" style="left:2018.60px;top:966.84px;font-size:19.5px;line-height:23.40px;color:#f4f4f4;">90</span>
<span class="t" style="left:2113.93px;top:966.84px;font-size:19.5px;line-height:23.40px;color:#f4f4f4;">100</span>
<div style="position:absolute;left:864px;top:996.0px;width:1316px;height:35.43px;background:#434343;"></div>
<span class="t" style="left:880.00px;top:1002.85px;font-size:21.5px;line-height:25.80px;color:#f2f2f2;font-weight:bold;transform:scaleX(0.9547);">x: CIE31</span>
<span class="t" style="left:1078.00px;top:1001.09px;font-size:22.3px;line-height:26.76px;color:#f2f2f2;transform:scaleX(0.9300);">0,294</span>
<span class="t" style="left:1178.75px;top:1001.09px;font-size:22.3px;line-height:26.76px;color:#f2f2f2;transform:scaleX(0.9300);">0,312</span>
<span class="t" style="left:1279.50px;top:1001.09px;font-size:22.3px;line-height:26.76px;color:#f2f2f2;transform:scaleX(0.9300);">0,312</span>
<span class="t" style="left:1380.25px;top:1001.09px;font-size:22.3px;line-height:26.76px;color:#f2f2f2;transform:scaleX(0.9584);">0,311</span>
<span class="t" style="left:1481.00px;top:1001.09px;font-size:22.3px;line-height:26.76px;color:#f2f2f2;transform:scaleX(0.9300);">0,312</span>
<span class="t" style="left:1581.75px;top:1001.09px;font-size:22.3px;line-height:26.76px;color:#f2f2f2;transform:scaleX(0.9300);">0,312</span>
<span class="t" style="left:1682.50px;top:1001.09px;font-size:22.3px;line-height:26.76px;color:#f2f2f2;transform:scaleX(0.9300);">0,312</span>
<span class="t" style="left:1783.25px;top:1001.09px;font-size:22.3px;line-height:26.76px;color:#f2f2f2;transform:scaleX(0.9584);">0,311</span>
<span class="t" style="left:1884.00px;top:1001.09px;font-size:22.3px;line-height:26.76px;color:#f2f2f2;transform:scaleX(0.9584);">0,311</span>
<span class="t" style="left:1984.75px;top:1001.09px;font-size:22.3px;line-height:26.76px;color:#f2f2f2;transform:scaleX(0.9584);">0,311</span>
<span class="t" style="left:2085.50px;top:1001.09px;font-size:22.3px;line-height:26.76px;color:#f2f2f2;transform:scaleX(0.9300);">0,312</span>
<div style="position:absolute;left:864px;top:1031.43px;width:1316px;height:35.43px;background:#848484;"></div>
<span class="t" style="left:880.00px;top:1038.28px;font-size:21.5px;line-height:25.80px;color:#ececec;font-weight:bold;transform:scaleX(0.9547);">y: CIE31</span>
<span class="t" style="left:1078.00px;top:1036.52px;font-size:22.3px;line-height:26.76px;color:#ececec;transform:scaleX(0.9300);">0,274</span>
<span class="t" style="left:1178.75px;top:1036.52px;font-size:22.3px;line-height:26.76px;color:#ececec;transform:scaleX(0.9300);">0,317</span>
<span class="t" style="left:1279.50px;top:1036.52px;font-size:22.3px;line-height:26.76px;color:#ececec;transform:scaleX(0.9300);">0,326</span>
<span class="t" style="left:1380.25px;top:1036.52px;font-size:22.3px;line-height:26.76px;color:#ececec;transform:scaleX(0.9300);">0,326</span>
<span class="t" style="left:1481.00px;top:1036.52px;font-size:22.3px;line-height:26.76px;color:#ececec;transform:scaleX(0.9300);">0,327</span>
<span class="t" style="left:1581.75px;top:1036.52px;font-size:22.3px;line-height:26.76px;color:#ececec;transform:scaleX(0.9300);">0,327</span>
<span class="t" style="left:1682.50px;top:1036.52px;font-size:22.3px;line-height:26.76px;color:#ececec;transform:scaleX(0.9300);">0,328</span>
<span class="t" style="left:1783.25px;top:1036.52px;font-size:22.3px;line-height:26.76px;color:#ececec;transform:scaleX(0.9300);">0,327</span>
<span class="t" style="left:1884.00px;top:1036.52px;font-size:22.3px;line-height:26.76px;color:#ececec;transform:scaleX(0.9300);">0,328</span>
<span class="t" style="left:1984.75px;top:1036.52px;font-size:22.3px;line-height:26.76px;color:#ececec;transform:scaleX(0.9300);">0,328</span>
<span class="t" style="left:2085.50px;top:1036.52px;font-size:22.3px;line-height:26.76px;color:#ececec;transform:scaleX(0.9300);">0,328</span>
<div style="position:absolute;left:864px;top:1066.86px;width:1316px;height:35.43px;background:#434343;"></div>
<span class="t" style="left:880.00px;top:1073.71px;font-size:21.5px;line-height:25.80px;color:#f2f2f2;font-weight:bold;transform:scaleX(0.8716);">Y</span>
<span class="t" style="left:1078.00px;top:1071.95px;font-size:22.3px;line-height:26.76px;color:#f2f2f2;transform:scaleX(0.9300);">0,455</span>
<span class="t" style="left:1178.75px;top:1071.95px;font-size:22.3px;line-height:26.76px;color:#f2f2f2;transform:scaleX(0.9300);">3,977</span>
<span class="t" style="left:1279.50px;top:1071.95px;font-size:22.3px;line-height:26.76px;color:#f2f2f2;transform:scaleX(0.9398);">16,742</span>
<span class="t" style="left:1380.25px;top:1071.95px;font-size:22.3px;line-height:26.76px;color:#f2f2f2;transform:scaleX(0.9398);">40,039</span>
<span class="t" style="left:1481.00px;top:1071.95px;font-size:22.3px;line-height:26.76px;color:#f2f2f2;transform:scaleX(0.9398);">73,878</span>
<span class="t" style="left:1581.75px;top:1071.95px;font-size:22.3px;line-height:26.76px;color:#f2f2f2;transform:scaleX(0.9664);">119,903</span>
<span class="t" style="left:1682.50px;top:1071.95px;font-size:22.3px;line-height:26.76px;color:#f2f2f2;transform:scaleX(0.9465);">179,378</span>
<span class="t" style="left:1783.25px;top:1071.95px;font-size:22.3px;line-height:26.76px;color:#f2f2f2;transform:scaleX(0.9465);">251,641</span>
<span class="t" style="left:1884.00px;top:1071.95px;font-size:22.3px;line-height:26.76px;color:#f2f2f2;transform:scaleX(0.9465);">342,683</span>
<span class="t" style="left:1984.75px;top:1071.95px;font-size:22.3px;line-height:26.76px;color:#f2f2f2;transform:scaleX(0.9465);">448,443</span>
<span class="t" style="left:2085.50px;top:1071.95px;font-size:22.3px;line-height:26.76px;color:#f2f2f2;transform:scaleX(0.9465);">567,621</span>
<div style="position:absolute;left:864px;top:1102.29px;width:1316px;height:35.43px;background:#848484;"></div>
<span class="t" style="left:880.00px;top:1109.14px;font-size:21.5px;line-height:25.80px;color:#ececec;font-weight:bold;transform:scaleX(1.0114);">Target Y</span>
<span class="t" style="left:1078.00px;top:1107.38px;font-size:22.3px;line-height:26.76px;color:#ececec;transform:scaleX(0.9300);">0,000</span>
<span class="t" style="left:1178.75px;top:1107.38px;font-size:22.3px;line-height:26.76px;color:#ececec;transform:scaleX(0.9300);">5,863</span>
<span class="t" style="left:1279.50px;top:1107.38px;font-size:22.3px;line-height:26.76px;color:#ececec;transform:scaleX(0.9398);">18,791</span>
<span class="t" style="left:1380.25px;top:1107.38px;font-size:22.3px;line-height:26.76px;color:#ececec;transform:scaleX(0.9398);">41,023</span>
<span class="t" style="left:1481.00px;top:1107.38px;font-size:22.3px;line-height:26.76px;color:#ececec;transform:scaleX(0.9398);">75,419</span>
<span class="t" style="left:1581.75px;top:1107.38px;font-size:22.3px;line-height:26.76px;color:#ececec;transform:scaleX(0.9465);">122,527</span>
<span class="t" style="left:1682.50px;top:1107.38px;font-size:22.3px;line-height:26.76px;color:#ececec;transform:scaleX(0.9465);">180,814</span>
<span class="t" style="left:1783.25px;top:1107.38px;font-size:22.3px;line-height:26.76px;color:#ececec;transform:scaleX(0.9465);">252,706</span>
<span class="t" style="left:1884.00px;top:1107.38px;font-size:22.3px;line-height:26.76px;color:#ececec;transform:scaleX(0.9465);">342,745</span>
<span class="t" style="left:1984.75px;top:1107.38px;font-size:22.3px;line-height:26.76px;color:#ececec;transform:scaleX(0.9465);">449,158</span>
<span class="t" style="left:2085.50px;top:1107.38px;font-size:22.3px;line-height:26.76px;color:#ececec;transform:scaleX(0.9465);">567,621</span>
<div style="position:absolute;left:864px;top:1137.72px;width:1316px;height:35.43px;background:#434343;"></div>
<span class="t" style="left:880.00px;top:1144.57px;font-size:21.5px;line-height:25.80px;color:#f2f2f2;font-weight:bold;transform:scaleX(1.0317);">Gamma Log/Log</span>
<span class="t" style="left:1078.00px;top:1142.81px;font-size:22.3px;line-height:26.76px;color:#f2f2f2;transform:scaleX(0.9300);">1,278</span>
<span class="t" style="left:1178.75px;top:1142.81px;font-size:22.3px;line-height:26.76px;color:#f2f2f2;transform:scaleX(0.9300);">2,173</span>
<span class="t" style="left:1279.50px;top:1142.81px;font-size:22.3px;line-height:26.76px;color:#f2f2f2;transform:scaleX(0.9300);">2,189</span>
<span class="t" style="left:1380.25px;top:1142.81px;font-size:22.3px;line-height:26.76px;color:#f2f2f2;transform:scaleX(0.9300);">2,190</span>
<span class="t" style="left:1481.00px;top:1142.81px;font-size:22.3px;line-height:26.76px;color:#f2f2f2;transform:scaleX(0.9300);">2,225</span>
<span class="t" style="left:1581.75px;top:1142.81px;font-size:22.3px;line-height:26.76px;color:#f2f2f2;transform:scaleX(0.9300);">2,256</span>
<span class="t" style="left:1682.50px;top:1142.81px;font-size:22.3px;line-height:26.76px;color:#f2f2f2;transform:scaleX(0.9300);">2,255</span>
<span class="t" style="left:1783.25px;top:1142.81px;font-size:22.3px;line-height:26.76px;color:#f2f2f2;transform:scaleX(0.9300);">2,263</span>
<span class="t" style="left:1884.00px;top:1142.81px;font-size:22.3px;line-height:26.76px;color:#f2f2f2;transform:scaleX(0.9300);">2,262</span>
<span class="t" style="left:1984.75px;top:1142.81px;font-size:22.3px;line-height:26.76px;color:#f2f2f2;transform:scaleX(0.9300);">2,284</span>
<span class="t" style="left:2085.50px;top:1142.81px;font-size:22.3px;line-height:26.76px;color:#f2f2f2;transform:scaleX(0.9300);">2,275</span>
<div style="position:absolute;left:864px;top:1173.15px;width:1316px;height:35.43px;background:#848484;"></div>
<span class="t" style="left:880.00px;top:1180.00px;font-size:21.5px;line-height:25.80px;color:#ececec;font-weight:bold;transform:scaleX(0.8826);">CCT</span>
<span class="t" style="left:1078.00px;top:1178.24px;font-size:22.3px;line-height:26.76px;color:#ececec;transform:scaleX(0.9515);">9128,000</span>
<span class="t" style="left:1178.75px;top:1178.24px;font-size:22.3px;line-height:26.76px;color:#ececec;transform:scaleX(0.9515);">6645,000</span>
<span class="t" style="left:1279.50px;top:1178.24px;font-size:22.3px;line-height:26.76px;color:#ececec;transform:scaleX(0.9515);">6543,000</span>
<span class="t" style="left:1380.25px;top:1178.24px;font-size:22.3px;line-height:26.76px;color:#ececec;transform:scaleX(0.9515);">6627,000</span>
<span class="t" style="left:1481.00px;top:1178.24px;font-size:22.3px;line-height:26.76px;color:#ececec;transform:scaleX(0.9515);">6554,000</span>
<span class="t" style="left:1581.75px;top:1178.24px;font-size:22.3px;line-height:26.76px;color:#ececec;transform:scaleX(0.9515);">6561,000</span>
<span class="t" style="left:1682.50px;top:1178.24px;font-size:22.3px;line-height:26.76px;color:#ececec;transform:scaleX(0.9515);">6538,000</span>
<span class="t" style="left:1783.25px;top:1178.24px;font-size:22.3px;line-height:26.76px;color:#ececec;transform:scaleX(0.9515);">6598,000</span>
<span class="t" style="left:1884.00px;top:1178.24px;font-size:22.3px;line-height:26.76px;color:#ececec;transform:scaleX(0.9515);">6623,000</span>
<span class="t" style="left:1984.75px;top:1178.24px;font-size:22.3px;line-height:26.76px;color:#ececec;transform:scaleX(0.9515);">6612,000</span>
<span class="t" style="left:2085.50px;top:1178.24px;font-size:22.3px;line-height:26.76px;color:#ececec;transform:scaleX(0.9515);">6569,000</span>
<div style="position:absolute;left:864px;top:1208.58px;width:1316px;height:35.43px;background:#434343;"></div>
<span class="t" style="left:880.00px;top:1215.43px;font-size:21.5px;line-height:25.80px;color:#f2f2f2;font-weight:bold;transform:scaleX(1.0108);">ΔE 2000</span>
<span class="t" style="left:1078.00px;top:1213.67px;font-size:22.3px;line-height:26.76px;color:#f2f2f2;transform:scaleX(0.9300);">0,920</span>
<span class="t" style="left:1178.75px;top:1213.67px;font-size:22.3px;line-height:26.76px;color:#f2f2f2;transform:scaleX(0.9300);">2,383</span>
<span class="t" style="left:1279.50px;top:1213.67px;font-size:22.3px;line-height:26.76px;color:#f2f2f2;transform:scaleX(0.9300);">1,247</span>
<span class="t" style="left:1380.25px;top:1213.67px;font-size:22.3px;line-height:26.76px;color:#f2f2f2;transform:scaleX(0.9300);">0,657</span>
<span class="t" style="left:1481.00px;top:1213.67px;font-size:22.3px;line-height:26.76px;color:#f2f2f2;transform:scaleX(0.9300);">0,773</span>
<span class="t" style="left:1581.75px;top:1213.67px;font-size:22.3px;line-height:26.76px;color:#f2f2f2;transform:scaleX(0.9300);">0,959</span>
<span class="t" style="left:1682.50px;top:1213.67px;font-size:22.3px;line-height:26.76px;color:#f2f2f2;transform:scaleX(0.9300);">0,410</span>
<span class="t" style="left:1783.25px;top:1213.67px;font-size:22.3px;line-height:26.76px;color:#f2f2f2;transform:scaleX(0.9300);">0,696</span>
<span class="t" style="left:1884.00px;top:1213.67px;font-size:22.3px;line-height:26.76px;color:#f2f2f2;transform:scaleX(0.9300);">0,886</span>
<span class="t" style="left:1984.75px;top:1213.67px;font-size:22.3px;line-height:26.76px;color:#f2f2f2;transform:scaleX(0.9300);">0,915</span>
<span class="t" style="left:2085.50px;top:1213.67px;font-size:22.3px;line-height:26.76px;color:#f2f2f2;transform:scaleX(0.9300);">0,689</span>
<div style="position:absolute;left:0px;top:1329px;width:2293px;height:63px;background:linear-gradient(#454545,#2c2c2c);"></div>
<div style="position:absolute;left:2px;top:1329px;width:150px;height:61px;border-radius:5px;background:linear-gradient(#a4a4a4 0,#8a8a8a 35%,#5a5a5a 100%);box-shadow:inset 0 0 0 1px rgba(60,60,60,0.55);"></div>
<div style="position:absolute;left:7px;top:1334px;width:140px;height:36px;border-radius:4px;background:rgb(0,0,0);box-shadow:inset 0 1px 2px rgba(0,0,0,0.35);"></div>
<span class="t" style="left:74.55px;top:1374.12px;font-size:11.5px;line-height:13.80px;color:#2c2c2c;font-weight:bold;transform:scaleX(0.9225);">0</span>
<div style="position:absolute;left:154px;top:1329px;width:150px;height:61px;border-radius:5px;background:linear-gradient(#a4a4a4 0,#8a8a8a 35%,#5a5a5a 100%);box-shadow:inset 0 0 0 1px rgba(60,60,60,0.55);"></div>
<div style="position:absolute;left:159px;top:1334px;width:140px;height:36px;border-radius:4px;background:rgb(27,27,27);box-shadow:inset 0 1px 2px rgba(0,0,0,0.35);"></div>
<span class="t" style="left:223.60px;top:1374.12px;font-size:11.5px;line-height:13.80px;color:#2c2c2c;font-weight:bold;transform:scaleX(0.9225);">10</span>
<div style="position:absolute;left:306px;top:1329px;width:150px;height:61px;border-radius:5px;background:linear-gradient(#a4a4a4 0,#8a8a8a 35%,#5a5a5a 100%);box-shadow:inset 0 0 0 1px rgba(60,60,60,0.55);"></div>
<div style="position:absolute;left:311px;top:1334px;width:140px;height:36px;border-radius:4px;background:rgb(51,51,51);box-shadow:inset 0 1px 2px rgba(0,0,0,0.35);"></div>
<span class="t" style="left:375.60px;top:1374.12px;font-size:11.5px;line-height:13.80px;color:#2c2c2c;font-weight:bold;transform:scaleX(0.9225);">20</span>
<div style="position:absolute;left:458px;top:1329px;width:150px;height:61px;border-radius:5px;background:linear-gradient(#a4a4a4 0,#8a8a8a 35%,#5a5a5a 100%);box-shadow:inset 0 0 0 1px rgba(60,60,60,0.55);"></div>
<div style="position:absolute;left:463px;top:1334px;width:140px;height:36px;border-radius:4px;background:rgb(77,77,77);box-shadow:inset 0 1px 2px rgba(0,0,0,0.35);"></div>
<span class="t" style="left:527.60px;top:1374.12px;font-size:11.5px;line-height:13.80px;color:#2c2c2c;font-weight:bold;transform:scaleX(0.9225);">30</span>
<div style="position:absolute;left:610px;top:1329px;width:150px;height:61px;border-radius:5px;background:linear-gradient(#a4a4a4 0,#8a8a8a 35%,#5a5a5a 100%);box-shadow:inset 0 0 0 1px rgba(60,60,60,0.55);"></div>
<div style="position:absolute;left:615px;top:1334px;width:140px;height:36px;border-radius:4px;background:rgb(102,102,102);box-shadow:inset 0 1px 2px rgba(0,0,0,0.35);"></div>
<span class="t" style="left:679.60px;top:1374.12px;font-size:11.5px;line-height:13.80px;color:#2c2c2c;font-weight:bold;transform:scaleX(0.9225);">40</span>
<div style="position:absolute;left:762px;top:1329px;width:150px;height:61px;border-radius:5px;background:linear-gradient(#a4a4a4 0,#8a8a8a 35%,#5a5a5a 100%);box-shadow:inset 0 0 0 1px rgba(60,60,60,0.55);"></div>
<div style="position:absolute;left:767px;top:1334px;width:140px;height:36px;border-radius:4px;background:rgb(128,128,128);box-shadow:inset 0 1px 2px rgba(0,0,0,0.35);"></div>
<span class="t" style="left:831.60px;top:1374.12px;font-size:11.5px;line-height:13.80px;color:#2c2c2c;font-weight:bold;transform:scaleX(0.9225);">50</span>
<div style="position:absolute;left:914px;top:1329px;width:150px;height:61px;border-radius:5px;background:linear-gradient(#a4a4a4 0,#8a8a8a 35%,#5a5a5a 100%);box-shadow:inset 0 0 0 1px rgba(60,60,60,0.55);"></div>
<div style="position:absolute;left:919px;top:1334px;width:140px;height:36px;border-radius:4px;background:rgb(153,153,153);box-shadow:inset 0 1px 2px rgba(0,0,0,0.35);"></div>
<span class="t" style="left:983.60px;top:1374.12px;font-size:11.5px;line-height:13.80px;color:#2c2c2c;font-weight:bold;transform:scaleX(0.9225);">60</span>
<div style="position:absolute;left:1066px;top:1329px;width:150px;height:61px;border-radius:5px;background:linear-gradient(#a4a4a4 0,#8a8a8a 35%,#5a5a5a 100%);box-shadow:inset 0 0 0 1px rgba(60,60,60,0.55);"></div>
<div style="position:absolute;left:1071px;top:1334px;width:140px;height:36px;border-radius:4px;background:rgb(178,178,178);box-shadow:inset 0 1px 2px rgba(0,0,0,0.35);"></div>
<span class="t" style="left:1135.60px;top:1374.12px;font-size:11.5px;line-height:13.80px;color:#2c2c2c;font-weight:bold;transform:scaleX(0.9225);">70</span>
<div style="position:absolute;left:1218px;top:1329px;width:150px;height:61px;border-radius:5px;background:linear-gradient(#a4a4a4 0,#8a8a8a 35%,#5a5a5a 100%);box-shadow:inset 0 0 0 1px rgba(60,60,60,0.55);"></div>
<div style="position:absolute;left:1223px;top:1334px;width:140px;height:36px;border-radius:4px;background:rgb(204,204,204);box-shadow:inset 0 1px 2px rgba(0,0,0,0.35);"></div>
<span class="t" style="left:1287.60px;top:1374.12px;font-size:11.5px;line-height:13.80px;color:#2c2c2c;font-weight:bold;transform:scaleX(0.9225);">80</span>
<div style="position:absolute;left:1370px;top:1329px;width:150px;height:61px;border-radius:5px;background:linear-gradient(#a4a4a4 0,#8a8a8a 35%,#5a5a5a 100%);box-shadow:inset 0 0 0 1px rgba(60,60,60,0.55);"></div>
<div style="position:absolute;left:1375px;top:1334px;width:140px;height:36px;border-radius:4px;background:rgb(229,229,229);box-shadow:inset 0 1px 2px rgba(0,0,0,0.35);"></div>
<span class="t" style="left:1439.60px;top:1374.12px;font-size:11.5px;line-height:13.80px;color:#2c2c2c;font-weight:bold;transform:scaleX(0.9225);">90</span>
<div style="position:absolute;left:1522px;top:1329px;width:150px;height:61px;border-radius:5px;background:linear-gradient(#1c1c1c,#2e2e2e);"></div>
<div style="position:absolute;left:1527px;top:1334px;width:140px;height:36px;border-radius:4px;background:rgb(255,255,255);box-shadow:inset 0 1px 2px rgba(0,0,0,0.35);"></div>
<span class="t" style="left:1588.65px;top:1374.12px;font-size:11.5px;line-height:13.80px;color:#fff;font-weight:bold;transform:scaleX(0.9225);">100</span>
<div style="position:absolute;left:1969px;top:1329px;width:48px;height:18px;background:linear-gradient(#a6a6a6 0,#8c8c8c 40%,#666 100%);border-radius:5px 5px 0 0;"></div>
<div style="position:absolute;left:1969px;top:1348px;width:48px;height:42px;background:linear-gradient(#8a8a8a,#6a6a6a);border-radius:0 0 4px 4px;"></div>
<div style="position:absolute;left:2018px;top:1329px;width:46px;height:29px;background:linear-gradient(#a6a6a6 0,#8c8c8c 40%,#666 100%);border-radius:4px 0 0 0;"></div>
<div style="position:absolute;left:2065px;top:1329px;width:44px;height:29px;background:linear-gradient(#a6a6a6 0,#8c8c8c 40%,#666 100%);"></div>
<div style="position:absolute;left:2110px;top:1329px;width:44px;height:29px;background:linear-gradient(#a6a6a6 0,#8c8c8c 40%,#666 100%);"></div>
<div style="position:absolute;left:2155px;top:1329px;width:44px;height:29px;background:linear-gradient(#a6a6a6 0,#8c8c8c 40%,#666 100%);"></div>
<div style="position:absolute;left:2200px;top:1329px;width:44px;height:29px;background:linear-gradient(#a6a6a6 0,#8c8c8c 40%,#666 100%);"></div>
<div style="position:absolute;left:2244px;top:1329px;width:47px;height:30px;background:linear-gradient(#3a3a3a,#262626);"></div>
<div style="position:absolute;left:2018px;top:1360px;width:136px;height:30px;background:linear-gradient(#a6a6a6 0,#8c8c8c 40%,#666 100%);border-radius:5px 0 0 4px;"></div>
<div style="position:absolute;left:2155px;top:1360px;width:136px;height:30px;background:linear-gradient(#a6a6a6 0,#8c8c8c 40%,#666 100%);border-radius:0 5px 4px 0;"></div>
<svg width="2293" height="1392" viewBox="0 0 2293 1392"><defs><radialGradient id="cg" cx="50%" cy="30%" r="70%"><stop offset="0" stop-color="#6e6e6e"/><stop offset="1" stop-color="#a8a8a8"/></radialGradient></defs>
<circle cx="2041" cy="1343.5" r="10" fill="url(#cg)"/>
<circle cx="2087" cy="1343.5" r="10" fill="url(#cg)"/>
<circle cx="2132" cy="1343.5" r="10" fill="url(#cg)"/>
<circle cx="2177" cy="1343.5" r="10" fill="url(#cg)"/>
<circle cx="2222" cy="1343.5" r="10" fill="url(#cg)"/>
<circle cx="1993" cy="1338" r="7.5" fill="url(#cg)"/><path d="M1988.5 1340h9l-4.5-5z" fill="#3a3a3a"/>
<rect x="1978.5" y="1354.5" width="28" height="28" rx="3.5" fill="#b8b8b8" stroke="#2e2e2e" stroke-width="2.6"/><rect x="1986" y="1362" width="13" height="13" fill="#000"/>
<rect x="2037" y="1339.5" width="8" height="8" fill="#383838"/>
<path d="M2083.5 1338v11l9-5.5z" fill="#383838"/>
<path d="M2129.5 1339h-3v9h3M2134.500 1339h3v9h-3" fill="none" stroke="#383838" stroke-width="1.8"/><path d="M2130 1343.500h1.500M2132.500 1343.500h1.500" stroke="#383838" stroke-width="1.6"/>
<path d="M2177 1343.500c-1.800 -3 -6.500 -3 -6.500 0s4.700 3 6.500 0c1.800 -3 6.500 -3 6.500 0s-4.700 3 -6.500 0z" fill="none" stroke="#383838" stroke-width="1.700"/>
<path d="M2216.500 1342a6 6 0 0 1 10 -2.500M2227.500 1345a6 6 0 0 1 -10 2.500" fill="none" stroke="#383838" stroke-width="2.200"/><path d="M2228.500 1336.500v5h-5zM2215.500 1350.500v-5h5z" fill="#383838"/>
<circle cx="2267" cy="1344" r="10" fill="#2e2e2e"/>
<circle cx="2049.300" cy="1375.400" r="10" fill="url(#cg)"/><circle cx="2262" cy="1375.400" r="10" fill="url(#cg)"/>
<path d="M2048.500 1370.500l-4 5l4 5M2054 1370.500l-4 5l4 5" fill="none" stroke="#383838" stroke-width="1.500"/>
<path d="M2257.500 1370.500l4 5l-4 5M2263 1370.500l4 5l-4 5" fill="none" stroke="#383838" stroke-width="1.500"/></svg>
<span class="t" style="left:2075.80px;top:1363.00px;font-size:20.5px;line-height:24.60px;color:#333;transform:scaleX(1.1015);">Back</span>
<span class="t" style="left:2183.00px;top:1363.00px;font-size:20.5px;line-height:24.60px;color:#333;transform:scaleX(1.2099);">Next</span>
<div style="position:absolute;left:0px;top:1390px;width:2293px;height:1px;background:#1a1a1a;"></div>
<div style="position:absolute;left:2288.5px;top:96px;width:2.5px;height:1233px;background:linear-gradient(90deg,rgba(20,20,20,0),rgba(20,20,20,0.45));"></div>
<div style="position:absolute;left:2291px;top:31px;width:1px;height:1360px;background:#1b1b1b;"></div>
<div style="position:absolute;left:0px;top:1391px;width:2293px;height:1px;background:#888;"></div>
<div style="position:absolute;left:0px;top:31px;width:1px;height:1361px;background:#888;"></div>
<div style="position:absolute;left:1px;top:96px;width:1px;height:1233px;background:#2b2b2b;"></div>
<div style="position:absolute;left:2292px;top:31px;width:1px;height:1361px;background:#888;"></div>
</body></html>
